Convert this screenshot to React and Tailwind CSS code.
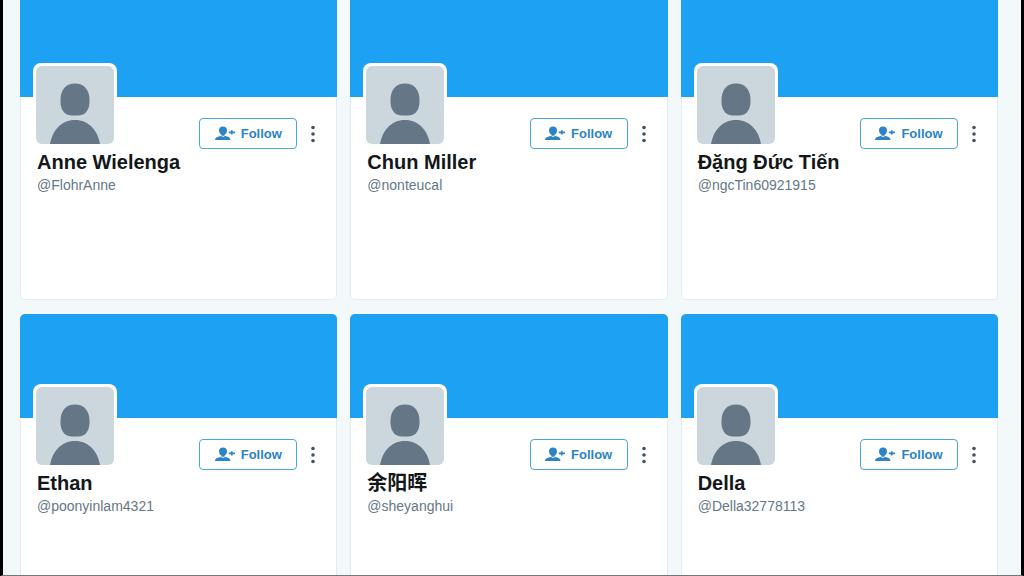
const people = [
  { name: "Anne Wielenga", handle: "FlohrAnne" },
  { name: "Chun Miller", handle: "nonteucal" },
  { name: "Đặng Đức Tiến", handle: "ngcTin60921915" },
  { name: "Ethan", handle: "poonyinlam4321" },
  { name: "余阳晖", handle: "sheyanghui" },
  { name: "Della", handle: "Della32778113" },
];

// Default profile picture
const Avatar = () => (
  <div className="-mt-[34px] size-[84px] shrink-0 rounded-lg bg-white p-[3px]">
    <svg viewBox="0 0 78 78" className="size-full rounded-md bg-[#ccd6dd]">
      <path
        fill="#657786"
        d="M39 17.500C48 17.500 52.500 23.500 53.300 31C54 38 53 43 49.800 46.500C47.500 49 44 49.500 39 49.500C34 49.500 30.500 49 28.200 46.500C25 43 24 38 24.700 31C25.500 23.500 30 17.500 39 17.500Z"
      />
      <path fill="#657786" d="M14 78C16.500 64 25.500 54 39 54C52.500 54 61.500 64 64 78Z" />
    </svg>
  </div>
);

const FollowIcon = () => (
  <svg viewBox="0 0 20 15" className="h-[15px] w-5" fill="currentColor" aria-hidden="true">
    <path d="M8 0.500C10.500 0.500 12 2 12 4.200C12 6.500 11 8 9.500 8.800V9.800H6.500V8.800C5 8 4 6.500 4 4.200C4 2 5.500 0.500 8 0.500Z" />
    <path d="M0 14C0 11.700 2.500 10.500 6 10L8 11L10 10C13.500 10.500 15.500 11.700 15.500 14Z" />
    <path d="M15.900 4.200H17.600V5.600H20V7.200H17.600V8.600H15.900V7.200H13.800V5.600H15.900Z" />
  </svg>
);

const MoreIcon = () => (
  <svg viewBox="0 0 4 18" className="h-[18px] w-1" fill="#46525e" aria-hidden="true">
    <circle cx="2" cy="2.500" r="1.800" />
    <circle cx="2" cy="9" r="1.800" />
    <circle cx="2" cy="15.500" r="1.800" />
  </svg>
);

function ProfileCard({ name, handle }) {
  return (
    <article className="h-[307px] overflow-hidden rounded-[5px] bg-white shadow-[inset_0_0_0_1px_#e1edf1]">
      <div className="h-[104px] bg-[#1da1f2]"></div>
      <div className="pr-5 pl-[13px]">
        <div className="flex items-start">
          <Avatar />
          <div className="ml-auto flex items-center gap-3 pt-[21px]">
            <button
              type="button"
              className="flex h-[31px] w-[98px] items-center justify-center gap-1.5 rounded border border-[#4aa7d2] text-[13px] font-bold text-[#2d83c3]"
            >
              <FollowIcon />
              Follow
            </button>
            <button type="button" aria-label="More options" className="px-0.5">
              <MoreIcon />
            </button>
          </div>
        </div>
        <div className="pl-1">
          <h2 className="text-[20px] leading-[26px] font-bold text-[#14171a]">{name}</h2>
          <p className="text-[14px] leading-5 text-[#657786]">@{handle}</p>
        </div>
      </div>
    </article>
  );
}

export default function App() {
  return (
    <div className="h-screen overflow-hidden border-x-[3px] border-b border-black border-b-[#777] bg-[#f3f8fb] pr-[23px] pl-[17px] font-['Liberation_Sans','Noto_Sans_CJK_SC',sans-serif]">
      <main className="-mt-[7px] grid grid-cols-3 gap-x-[13px] gap-y-[14px]">
        {people.map((person) => (
          <ProfileCard key={person.handle} {...person} />
        ))}
      </main>
    </div>
  );
}
